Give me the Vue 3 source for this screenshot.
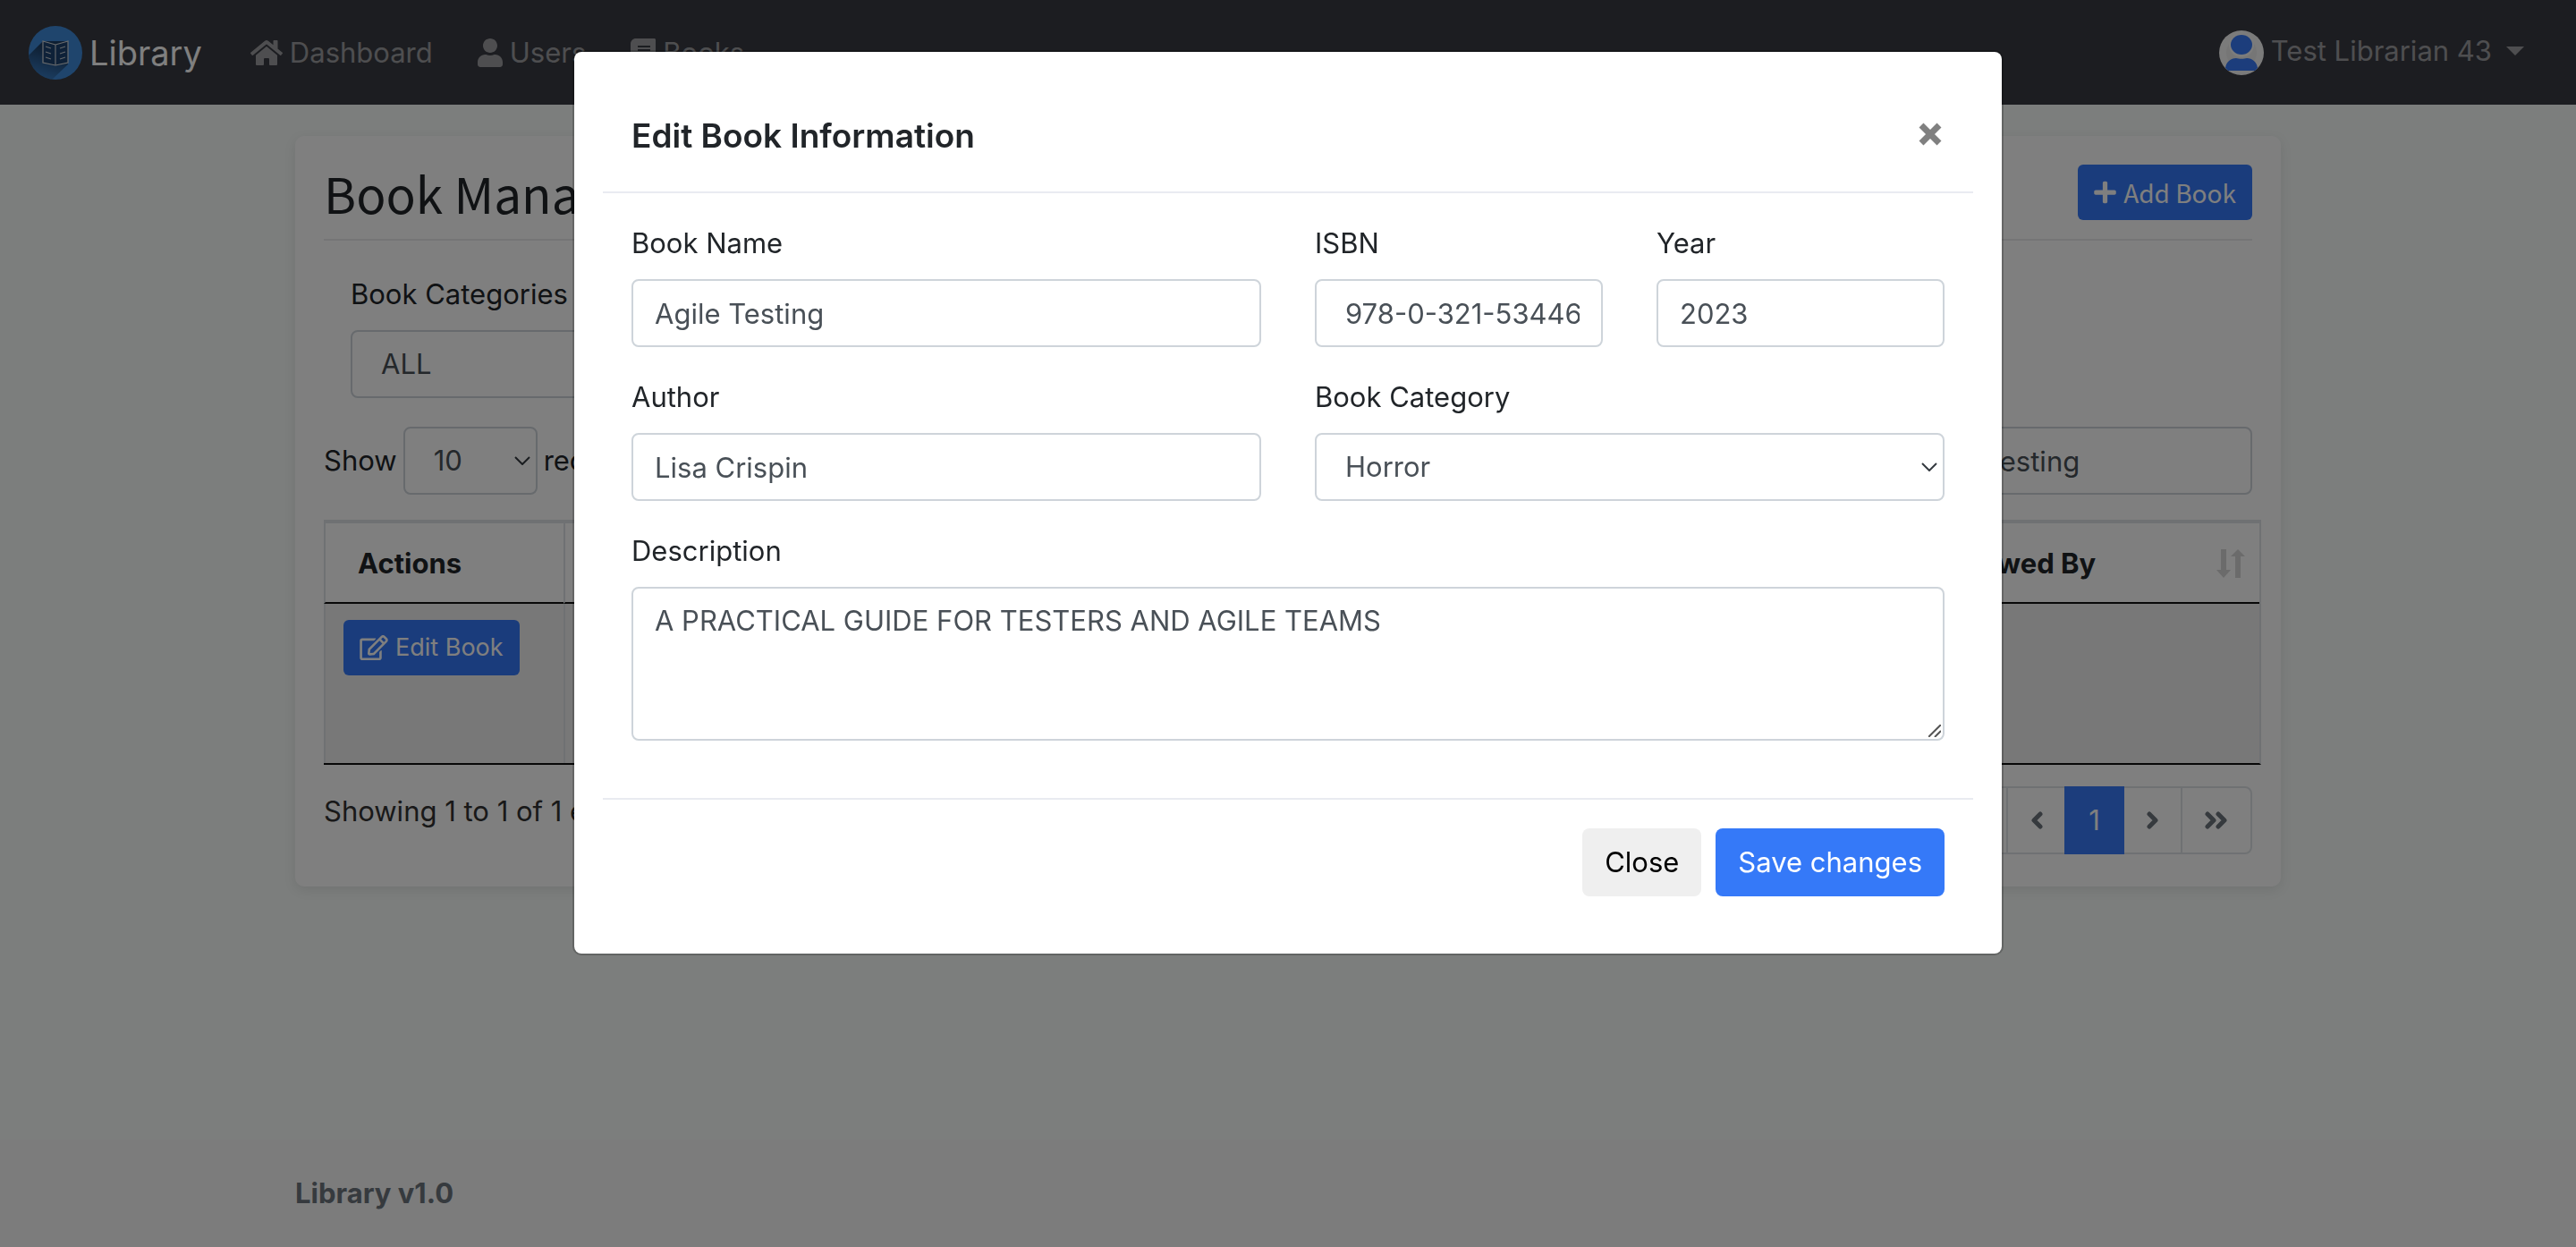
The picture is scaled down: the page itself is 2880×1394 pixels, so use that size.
<script setup>
import { ref } from 'vue'

const book = ref({
  name: 'Agile Testing',
  isbn: '978-0-321-53446-0',
  year: '2023',
  author: 'Lisa Crispin',
  category: 'Horror',
  description: 'A PRACTICAL GUIDE FOR TESTERS AND AGILE TEAMS'
})

const filterCategory = ref('ALL')
const pageSize = ref('10')
const search = ref('Agile Testing')

const homePath = 'M280.37 148.26L96 300.11V464a16 16 0 0 0 16 16l112.06-.29a16 16 0 0 0 15.92-16V368a16 16 0 0 1 16-16h64a16 16 0 0 1 16 16v95.64a16 16 0 0 0 16 16.05L464 480a16 16 0 0 0 16-16V300L295.67 148.26a12.19 12.19 0 0 0-15.3 0zM571.6 251.47L488 182.56V44.05a12 12 0 0 0-12-12h-56a12 12 0 0 0-12 12v72.61L318.47 43a48 48 0 0 0-61 0L4.34 251.47a12 12 0 0 0-1.6 16.9l25.5 31A12 12 0 0 0 45.15 301l235.22-193.74a12.19 12.19 0 0 1 15.3 0L530.9 301a12 12 0 0 0 16.9-1.6l25.5-31a12 12 0 0 0-1.7-16.93z'
const userPath = 'M224 256c70.7 0 128-57.3 128-128S294.7 0 224 0 96 57.3 96 128s57.3 128 128 128zm89.6 32h-16.7c-22.2 10.2-46.9 16-72.9 16s-50.6-5.8-72.9-16h-16.7C60.2 288 0 348.2 0 422.4V464c0 26.5 21.5 48 48 48h352c26.5 0 48-21.5 48-48v-41.6c0-74.2-60.2-134.4-134.4-134.4z'
const bookPath = 'M448 360V24c0-13.3-10.7-24-24-24H96C43 0 0 43 0 96v320c0 53 43 96 96 96h328c13.3 0 24-10.7 24-24v-16c0-7.5-3.5-14.3-8.9-18.7-4.2-15.4-4.2-59.3 0-74.7 5.4-4.3 8.9-11.1 8.9-18.6zM128 134c0-3.3 2.7-6 6-6h212c3.3 0 6 2.7 6 6v20c0 3.3-2.7 6-6 6H134c-3.3 0-6-2.7-6-6v-20zm0 64c0-3.3 2.7-6 6-6h212c3.3 0 6 2.7 6 6v20c0 3.3-2.7 6-6 6H134c-3.3 0-6-2.7-6-6v-20zm253.4 250H96c-17.7 0-32-14.3-32-32 0-17.6 14.4-32 32-32h285.4c-1.9 17.1-1.9 46.9 0 64z'
const plusPath = 'M416 208H272V64c0-17.67-14.33-32-32-32h-32c-17.67 0-32 14.33-32 32v144H32c-17.67 0-32 14.33-32 32v32c0 17.67 14.33 32 32 32h144v144c0 17.67 14.33 32 32 32h32c17.67 0 32-14.33 32-32V304h144c17.67 0 32-14.33 32-32v-32c0-17.67-14.33-32-32-32z'
const editPath = 'M402.3 344.9l32-32c5-5 13.7-1.5 13.7 5.7V464c0 26.5-21.5 48-48 48H48c-26.5 0-48-21.5-48-48V112c0-26.5 21.5-48 48-48h273.5c7.1 0 10.7 8.6 5.7 13.7l-32 32c-1.5 1.5-3.5 2.3-5.7 2.3H48v352h352V350.5c0-2.1.8-4.1 2.3-5.6zm156.6-201.8L296.3 405.7l-90.4 10c-26.2 2.9-48.5-19.2-45.6-45.6l10-90.4L432.9 17.1c22.9-22.9 59.9-22.9 82.7 0l43.2 43.2c22.9 22.9 22.9 60 .1 82.8zM460.1 174L402 115.9 216.2 301.8l-7.3 65.3 65.3-7.3L460.1 174zm64.8-79.7l-43.2-43.2c-4.1-4.1-10.8-4.1-14.8 0L436 82l58.1 58.1 30.9-30.9c4-4.2 4-10.8-.1-14.9z'
</script>

<template>
  <div class="page">
    <header class="navbar">
      <a class="brand" href="#">
        <svg class="logo" viewBox="0 0 60 60" aria-hidden="true">
          <defs>
            <linearGradient id="logo-shade" x1="0.5" y1="0.2" x2="0.25" y2="1">
              <stop offset="0" stop-color="#1d3f66" />
              <stop offset="1" stop-color="#1d3f66" stop-opacity="0.15" />
            </linearGradient>
            <clipPath id="logo-disc"><circle cx="30" cy="30" r="30" /></clipPath>
          </defs>
          <circle cx="30" cy="30" r="30" fill="#3f8bdb" />
          <path clip-path="url(#logo-disc)" d="M16 17 0 33v27h26l18-17V17z" fill="url(#logo-shade)" />
          <path d="M16 17l14 4 14-4v24l-14 3-14-3z" fill="#1d4370" stroke="#d4d8dc" stroke-width="1.2" />
          <path d="M30 21v23M19 23l6 2M19 29l6 2M19 35l6 2M41 23l-6 2M41 29l-6 2M41 35l-6 2" fill="none" stroke="#c4ccd4" stroke-width="1.2" />
        </svg>
        <span>Library</span>
      </a>
      <nav class="links">
        <a href="#"><svg class="icon-wide" viewBox="0 0 576 512"><path :d="homePath" /></svg>Dashboard</a>
        <a href="#"><svg class="icon" viewBox="0 0 448 512"><path :d="userPath" /></svg>Users</a>
        <a href="#"><svg class="icon" viewBox="0 0 448 512"><path :d="bookPath" /></svg>Books</a>
      </nav>
      <a class="account" href="#">
        <svg class="avatar" viewBox="0 0 50 50" aria-hidden="true">
          <circle cx="25" cy="25" r="25" fill="#f6f6f6" />
          <circle cx="25" cy="25" r="17" fill="#ececec" />
          <ellipse cx="25" cy="16" rx="14" ry="14" fill="#f8f8f8" />
          <ellipse cx="25" cy="16" rx="12" ry="11" fill="#387af8" />
          <path d="M7 42c1-7 6-11 12-11 3 1 9 1 12 0 6 0 11 4 12 11l-3 3H10z" fill="#387af8" />
        </svg>
        <span class="account-name">Test Librarian 43<i class="caret"></i></span>
      </a>
    </header>

    <main class="main">
      <section class="card">
        <div class="card-head">
          <h1>Book Management</h1>
          <button type="button" class="btn btn-sm btn-primary btn-add">
            <svg class="icon-sm" viewBox="0 0 448 512"><path :d="plusPath" /></svg>Add Book
          </button>
        </div>

        <div class="filter">
          <label for="filter-category">Book Categories</label>
          <div class="select">
            <select id="filter-category" v-model="filterCategory" class="control inset">
              <option>ALL</option>
            </select>
            <svg viewBox="0 0 18 10"><path d="M1 1l8 8 8-8" /></svg>
          </div>
        </div>

        <div class="toolbar">
          <label class="length">
            Show
            <span class="select">
              <select v-model="pageSize" class="control inset"><option>10</option></select>
              <svg viewBox="0 0 18 10"><path d="M1 1l8 8 8-8" /></svg>
            </span>
            records
          </label>
          <input v-model="search" type="text" class="control search" aria-label="Search books" />
        </div>

        <table class="books">
          <thead>
            <tr>
              <th class="col-actions">Actions</th>
              <th></th>
              <th class="col-last">
                <div class="th-inner">
                  Borrowed By
                  <svg class="sort" viewBox="0 0 32 32"><path d="M5 0h6v23h5l-8 9-8-9h5zM21 32h6V8h5l-8-8-8 8h5z" /></svg>
                </div>
              </th>
            </tr>
          </thead>
          <tbody>
            <tr>
              <td>
                <button type="button" class="btn btn-sm btn-primary">
                  <svg class="icon-edit" viewBox="0 0 576 512"><path :d="editPath" /></svg>Edit Book
                </button>
              </td>
              <td></td>
              <td></td>
            </tr>
          </tbody>
        </table>

        <div class="table-foot">
          <span>Showing 1 to 1 of 1 entries</span>
          <nav class="pages" aria-label="Pages">
            <button type="button" class="wide" aria-label="First"><svg viewBox="0 0 26 20" class="dbl"><path d="M11 3l-7 7 7 7M23 3l-7 7 7 7" /></svg></button>
            <button type="button" aria-label="Previous"><svg viewBox="0 0 14 20"><path d="M11 3l-7 7 7 7" /></svg></button>
            <button type="button" class="active">1</button>
            <button type="button" aria-label="Next"><svg viewBox="0 0 14 20"><path d="M3 3l7 7-7 7" /></svg></button>
            <button type="button" class="wide" aria-label="Last"><svg viewBox="0 0 26 20" class="dbl"><path d="M3 3l7 7-7 7M15 3l7 7-7 7" /></svg></button>
          </nav>
        </div>
      </section>
    </main>

    <footer class="footer"><div class="footer-inner">Library v1.0</div></footer>

    <div class="backdrop">
      <form class="modal" role="dialog" aria-labelledby="modal-title" @submit.prevent>
        <div class="modal-head">
          <h2 id="modal-title">Edit Book Information</h2>
          <button type="button" class="close" aria-label="Close dialog">
            <svg viewBox="0 0 26 26"><path d="M3 3l20 20M23 3L3 23" /></svg>
          </button>
        </div>

        <div class="modal-body">
          <div class="field half">
            <label for="book-name">Book Name</label>
            <input id="book-name" v-model="book.name" type="text" class="control" />
          </div>
          <div class="field">
            <label for="book-isbn">ISBN</label>
            <input id="book-isbn" v-model="book.isbn" type="text" class="control inset" />
          </div>
          <div class="field">
            <label for="book-year">Year</label>
            <input id="book-year" v-model="book.year" type="text" class="control" />
          </div>
          <div class="field half">
            <label for="book-author">Author</label>
            <input id="book-author" v-model="book.author" type="text" class="control" />
          </div>
          <div class="field half">
            <label for="book-category">Book Category</label>
            <div class="select">
              <select id="book-category" v-model="book.category" class="control inset">
                <option>Horror</option>
              </select>
              <svg viewBox="0 0 18 10"><path d="M1 1l8 8 8-8" /></svg>
            </div>
          </div>
          <div class="field full">
            <label for="book-description">Description</label>
            <div class="area">
              <textarea id="book-description" v-model="book.description" class="control"></textarea>
              <svg class="grip" viewBox="0 0 14 14"><path d="M0 14L14 0M7 14l7-7" /></svg>
            </div>
          </div>
        </div>

        <div class="modal-foot">
          <button type="button" class="btn btn-light">Close</button>
          <button type="submit" class="btn btn-primary">Save changes</button>
        </div>
      </form>
    </div>
  </div>
</template>

<style>
body {
  margin: 0;
  background: #f8fcfa;
}
</style>

<style scoped>
.page,
.page * {
  box-sizing: border-box;
}
.page {
  display: flex;
  flex-direction: column;
  min-height: 100vh;
  font-family: Inter, "Liberation Sans", sans-serif;
  font-size: 31px;
  line-height: 48px;
  color: #212529;
}
button,
input,
select,
textarea {
  font: inherit;
}
a {
  color: inherit;
  text-decoration: none;
}
svg {
  flex: none;
}

/* Navigation bar */
.navbar {
  display: flex;
  align-items: center;
  height: 117px;
  padding: 0 58px 0 32px;
  background: #393b42;
  color: rgba(255, 255, 255, 0.5);
}
.brand {
  display: flex;
  align-items: center;
  gap: 8px;
  margin-right: 54px;
  color: #fff;
  font-size: 38px;
}
.logo {
  width: 60px;
  height: 60px;
}
.links {
  display: flex;
  gap: 50px;
}
.links a {
  display: flex;
  align-items: center;
  gap: 8px;
}
.links svg,
.btn svg {
  fill: currentColor;
}
.icon {
  width: 28px;
  height: 32px;
}
.icon-wide {
  width: 36px;
  height: 32px;
}
.account {
  display: flex;
  align-items: center;
  gap: 8px;
  margin-left: auto;
}
.account-name {
  display: flex;
  align-items: center;
  gap: 16px;
  padding-bottom: 4px;
}
.avatar {
  width: 50px;
  height: 50px;
}
.caret {
  border: 10px solid transparent;
  border-top-color: currentColor;
  border-bottom: 0;
}

/* Content card */
.main {
  flex: 1;
  width: 100%;
  max-width: 2220px;
  margin: 0 auto;
  padding: 35px 0;
}
.card {
  padding: 32px 32px 36px;
  border-radius: 10px;
  background: #fff;
  box-shadow: 0 4px 14px rgba(0, 0, 0, 0.09);
}
.card-head {
  display: flex;
  justify-content: space-between;
  align-items: flex-start;
  height: 85px;
  margin-bottom: 36px;
  border-bottom: 2px solid #eaeaec;
}
h1,
.btn-add {
  font-family: "Noto Sans CJK JP", "Noto Sans", sans-serif;
}
h1 {
  margin: 0;
  font-size: 55px;
  font-weight: 400;
  line-height: 62px;
}
.filter {
  width: 33%;
  margin-left: 30px;
}
label {
  display: block;
}
.filter label,
.field label {
  margin-bottom: 16px;
}
.control {
  display: block;
  width: 100%;
  height: 76px;
  margin: 0;
  padding: 12px 24px;
  border: 2px solid #ced4da;
  border-radius: 8px;
  background: #fff;
  color: #495057;
  outline: 0;
  appearance: none;
}
.inset {
  padding-left: 32px;
}
.select,
.area {
  position: relative;
}
.select svg {
  position: absolute;
  right: 8px;
  top: 33px;
  width: 18px;
  height: 10px;
  fill: none;
  stroke: #343a40;
  stroke-width: 2;
  pointer-events: none;
}
.toolbar {
  display: flex;
  justify-content: space-between;
  margin: 32px 0 28px;
}
.length {
  display: flex;
  align-items: center;
  gap: 7px;
}
.length .select {
  width: 150px;
}
.search {
  width: 408px;
}

/* Table */
.books {
  width: calc(100% + 10px);
  table-layout: fixed;
  border-collapse: separate;
  border-spacing: 0;
  border-right: 2px solid #dee2e6;
  border-bottom: 2px solid #111;
}
.books th {
  height: 94px;
  padding: 2px 16px 0 36px;
  border-top: 4px solid #dee2e6;
  border-bottom: 2px solid #111;
  border-left: 2px solid #dee2e6;
  text-align: left;
  font-weight: 700;
}
.books .col-actions {
  width: 268px;
}
.books .col-last {
  width: 414px;
}
.th-inner {
  display: flex;
  align-items: center;
  justify-content: space-between;
}
.sort {
  width: 32px;
  height: 32px;
  fill: #d6d6d6;
}
.books td {
  height: 178px;
  padding: 18px 20px;
  border-left: 2px solid #dee2e6;
  background: #f1f1f1;
  vertical-align: top;
}
.table-foot {
  display: flex;
  justify-content: space-between;
  align-items: flex-start;
  margin-top: 24px;
  color: #333;
}
.table-foot span {
  padding-top: 4px;
}
.pages {
  display: flex;
}
.pages button {
  display: flex;
  align-items: center;
  justify-content: center;
  width: 67px;
  height: 76px;
  margin-left: -2px;
  padding: 0;
  border: 2px solid #dee2e6;
  background: #fff;
  color: #6c757d;
}
.pages .wide {
  width: 80px;
}
.pages button:first-child {
  border-radius: 8px 0 0 8px;
}
.pages button:last-child {
  border-radius: 0 8px 8px 0;
}
.pages .active {
  z-index: 1;
  border-color: #387af8;
  background: #387af8;
  color: #fff;
}
.pages svg {
  width: 14px;
  height: 20px;
  fill: none;
  stroke: #6c757d;
  stroke-width: 5;
  stroke-linecap: round;
  stroke-linejoin: round;
}
.pages .dbl {
  width: 26px;
}

/* Buttons */
.btn {
  display: inline-flex;
  align-items: center;
  justify-content: center;
  height: 76px;
  padding: 0 25px;
  border: 0;
  border-radius: 8px;
}
.btn-sm {
  gap: 8px;
  height: 62px;
  padding: 0 18px;
  border-radius: 6px;
  font-size: 27px;
}
.btn-add {
  font-size: 28px;
}
.btn-primary {
  background: #3579f8;
  color: #fff;
}
.btn-light {
  background: #efefef;
  color: #000;
}
.icon-sm {
  width: 25px;
  height: 28px;
}
.icon-edit {
  width: 32px;
  height: 28px;
}

/* Footer */
.footer {
  padding: 36px 0;
  background: #f8f8f8;
  color: #6c757d;
  font-weight: 700;
}
.footer-inner {
  max-width: 2220px;
  margin: 0 auto;
}

/* Edit dialog */
.backdrop {
  position: fixed;
  inset: 0;
  z-index: 10;
  padding: 56px 32px;
  background: rgba(0, 0, 0, 0.5);
}
.modal {
  max-width: 1600px;
  margin: 0 auto;
  padding: 32px;
  border: 2px solid rgba(0, 0, 0, 0.2);
  border-radius: 10px;
  background: #fff;
  background-clip: padding-box;
}
.modal-head {
  display: flex;
  justify-content: space-between;
  align-items: flex-start;
  padding: 32px;
  border-bottom: 2px solid #e9ebf1;
}
h2 {
  margin: 0;
  font-size: 37px;
  font-weight: 600;
  line-height: 60px;
}
.close {
  display: flex;
  padding: 15px 3px;
  border: 0;
  background: none;
}
.close svg {
  width: 26px;
  height: 26px;
  fill: none;
  stroke: #808080;
  stroke-width: 7;
}
.modal-body {
  display: grid;
  grid-template-columns: repeat(4, 1fr);
  gap: 32px 60px;
  padding: 32px 32px 64px;
}
.field {
  min-width: 0;
}
.half {
  grid-column: span 2;
}
.full {
  grid-column: 1 / -1;
}
textarea.control {
  height: 172px;
  resize: none;
}
.grip {
  position: absolute;
  right: 4px;
  bottom: 4px;
  width: 14px;
  height: 14px;
  stroke: #555;
  stroke-width: 2;
}
.modal-foot {
  display: flex;
  justify-content: flex-end;
  gap: 16px;
  padding: 32px;
  border-top: 2px solid #e9ebf1;
}
</style>
